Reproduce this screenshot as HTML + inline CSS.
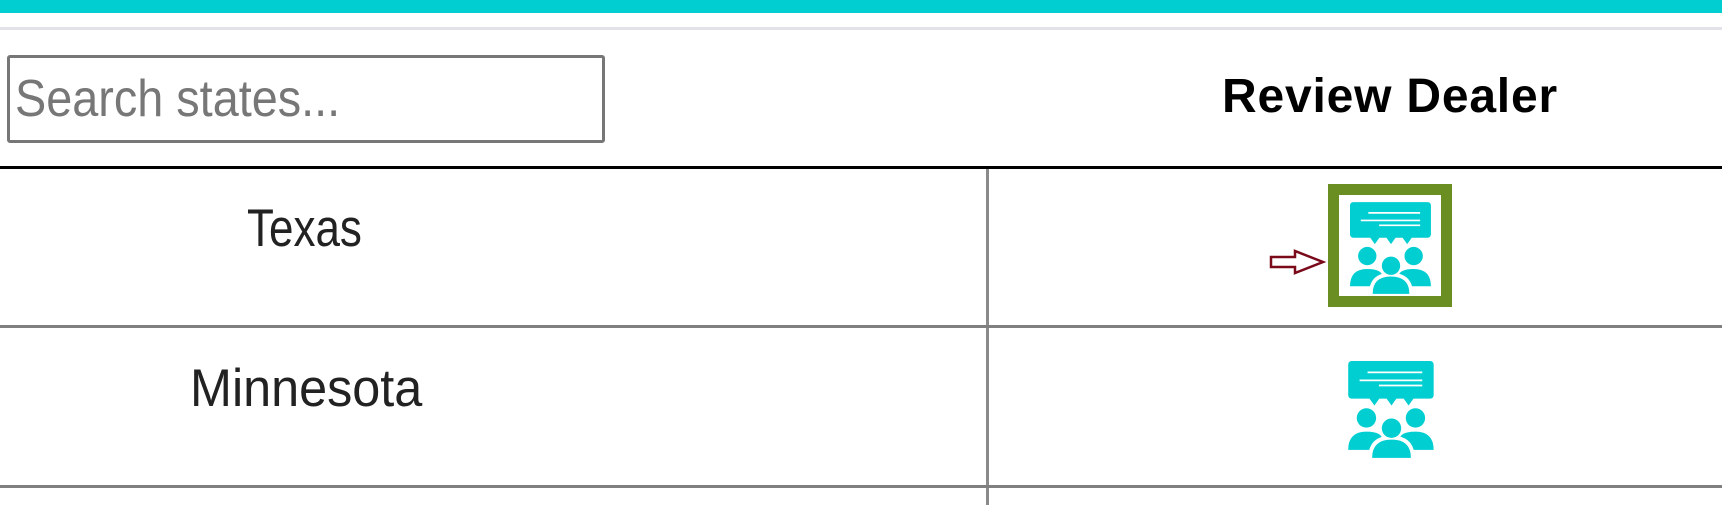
<!DOCTYPE html>
<html><head><style>
body{margin:0;width:1722px;height:505px;overflow:hidden;background:#fff;position:relative;font-family:"Liberation Sans",sans-serif}
div{position:absolute}
.t{color:#222;font-size:53px;white-space:nowrap;line-height:1;transform-origin:0 0}
</style></head><body>
<div style="left:0;top:0;width:1722px;height:13px;background:#00ced1"></div>
<div style="left:0;top:27px;width:1722px;height:3px;background:#e2e2e8"></div>
<div style="left:7px;top:55px;width:592px;height:82px;border:3px solid #777;border-radius:3px"></div>
<div style="left:15px;top:73px;font-size:52px;color:#777;white-space:nowrap;line-height:1;transform:scaleX(0.9);transform-origin:0 0">Search states...</div>
<div style="left:1222px;top:73px;font-size:48px;font-weight:bold;color:#000;letter-spacing:0.8px;white-space:nowrap;line-height:1">Review Dealer</div>
<div style="left:0;top:166px;width:1722px;height:3px;background:#000"></div>
<div style="left:986px;top:169px;width:3px;height:336px;background:#8a8a8a"></div>
<div style="left:0;top:325px;width:1722px;height:3px;background:#808080"></div>
<div style="left:0;top:485px;width:1722px;height:3px;background:#808080"></div>
<div class="t" style="left:247px;top:202px;transform:scaleX(0.83)">Texas</div>
<div class="t" style="left:190px;top:362px;transform:scaleX(0.95)">Minnesota</div>
<div style="left:1328px;top:184px;width:102px;height:101px;border:11px solid #6b8e23"></div>
<svg style="position:absolute;left:1268px;top:248px" width="60" height="30"><path d="M3 9 H27 V3 L55 14 L27 25 V19 H3 Z" fill="#fff" stroke="#7a0a1a" stroke-width="2.5"/></svg>
<svg style="position:absolute;left:1350px;top:202px" width="82" height="93" viewBox="0 0 76 86">
<g fill="#00ced1"><rect x="0" y="0" width="75" height="33" rx="3"/><path d="M18 32 L23 39 L28 32 M33 32 L38 39 L43 32 M48 32 L53 39 L58 32"/>
<circle cx="16" cy="50" r="8.5"/><circle cx="59" cy="50" r="8.5"/><path d="M0 78 Q0 62 16 62 Q32 62 30 72 L30 78 Z M75 78 Q75 62 59 62 Q43 62 45 72 L45 78 Z"/></g>
<circle cx="38" cy="59" r="10" fill="#fff"/><path d="M19 86 Q19 67 38 67 Q57 67 57 86 Z" fill="#fff" stroke="#fff" stroke-width="3"/>
<g fill="#00ced1"><circle cx="38" cy="59" r="8.5"/><path d="M21 85 Q21 69 38 69 Q55 69 55 85 Z"/></g>
<g stroke="#fff" stroke-width="1.6"><line x1="17" y1="10" x2="65" y2="10"/><line x1="10" y1="17" x2="65" y2="17"/><line x1="27" y1="21.5" x2="65" y2="21.5"/></g>
</svg>
<svg style="position:absolute;left:1348px;top:361px" width="87" height="98" viewBox="0 0 76 86">
<g fill="#00ced1"><rect x="0" y="0" width="75" height="33" rx="3"/><path d="M18 32 L23 39 L28 32 M33 32 L38 39 L43 32 M48 32 L53 39 L58 32"/>
<circle cx="16" cy="50" r="8.5"/><circle cx="59" cy="50" r="8.5"/><path d="M0 78 Q0 62 16 62 Q32 62 30 72 L30 78 Z M75 78 Q75 62 59 62 Q43 62 45 72 L45 78 Z"/></g>
<circle cx="38" cy="59" r="10" fill="#fff"/><path d="M19 86 Q19 67 38 67 Q57 67 57 86 Z" fill="#fff" stroke="#fff" stroke-width="3"/>
<g fill="#00ced1"><circle cx="38" cy="59" r="8.5"/><path d="M21 85 Q21 69 38 69 Q55 69 55 85 Z"/></g>
<g stroke="#fff" stroke-width="1.6"><line x1="17" y1="10" x2="65" y2="10"/><line x1="10" y1="17" x2="65" y2="17"/><line x1="27" y1="21.5" x2="65" y2="21.5"/></g>
</svg>
</body></html>
